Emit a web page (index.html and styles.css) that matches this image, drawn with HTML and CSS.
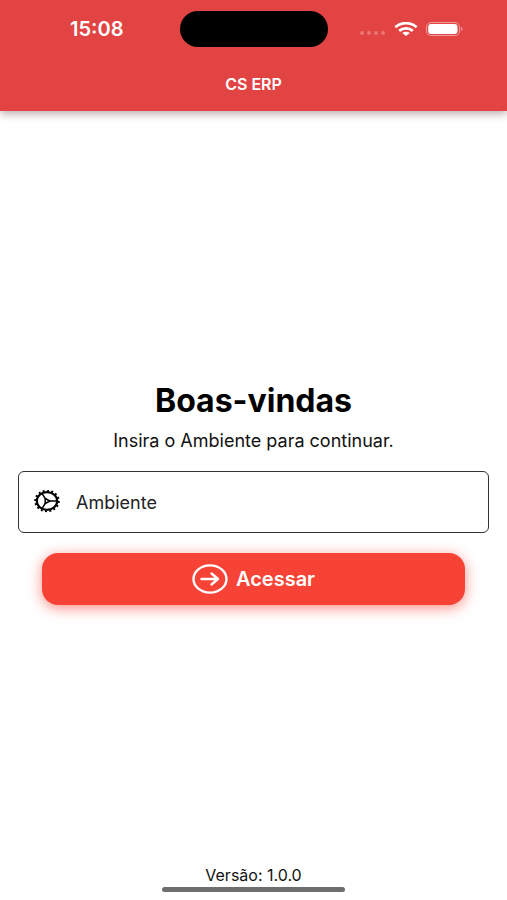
FILE: index.html
```html
<!DOCTYPE html>
<html lang="pt-BR">
<head>
    <meta charset="UTF-8">
    <meta name="viewport" content="width=device-width, initial-scale=1.0">
    <title>CS ERP</title>
    <link rel="stylesheet" href="styles.css">
</head>
<body>

<header class="app-bar">
    <div class="status-bar">
        <span class="clock">15:08</span>
        <span class="island"></span>
        <div class="status-icons">
            <svg class="dots" width="26" height="6" viewBox="0 0 26 6" aria-hidden="true">
                <circle cx="2" cy="3" r="2"/>
                <circle cx="9" cy="3" r="2"/>
                <circle cx="16" cy="3" r="2"/>
                <circle cx="23" cy="3" r="2"/>
            </svg>
            <svg width="24" height="14" viewBox="0 0 24 14" aria-hidden="true">
                <g fill="none" stroke="#fff" stroke-width="2.8">
                    <path d="M1.4 5.2C7 -0.2 17 -0.2 22.6 5.2"/>
                    <path d="M5.2 8.9C9 5.5 15 5.5 18.8 8.9"/>
                </g>
                <path fill="#fff" d="M8.2 11C10.4 9.2 13.6 9.2 15.8 11L12 14Z"/>
            </svg>
            <svg width="37" height="14" viewBox="0 0 37 14" aria-hidden="true">
                <rect x="0.5" y="0.5" width="33" height="13" rx="4.5" fill="none" stroke="#f09a9a"/>
                <rect x="2.2" y="2" width="29.3" height="10" rx="3" fill="#fff"/>
                <path fill="#f09a9a" d="M35 4.8C37 5.4 37 8.6 35 9.2Z"/>
            </svg>
        </div>
    </div>
    <div class="app-title">CS ERP</div>
</header>

<main>
    <form id="accessForm">
        <h1>Boas-vindas</h1>
        <p>Insira o Ambiente para continuar.</p>

        <label class="field" for="ambiente">
            <svg width="26" height="24" viewBox="0 0 26 24" fill="none" stroke="#000" aria-hidden="true">
                <ellipse cx="13" cy="11" rx="10.2" ry="8.8" stroke-width="2.2"/>
                <ellipse cx="13" cy="11" rx="11.8" ry="10.2" stroke-width="2" pathLength="64" stroke-dasharray="1.8 2.2"/>
                <path stroke-width="1.5" d="M15.5 11H23M11.4 8.9L8.2 3.6M11.4 13.1L8.2 18.4"/>
                <path stroke-width="1.5" stroke-linejoin="round" d="M11.2 8.5L15.8 11L11.2 13.5Z"/>
            </svg>
            <input type="text" id="ambiente" name="ambiente" placeholder="Ambiente" aria-label="Ambiente">
        </label>

        <button type="submit">
            <svg width="36" height="30" viewBox="0 0 36 30" fill="none" stroke="#fff" stroke-width="2.4" stroke-linecap="round" stroke-linejoin="round" aria-hidden="true">
                <ellipse cx="18" cy="15" rx="16.5" ry="13.6"/>
                <path d="M9.5 15H25.5M19.5 9.5L26 15L19.5 20.5"/>
            </svg>
            Acessar
        </button>
    </form>
</main>

<footer>
    <span>Versão: 1.0.0</span>
    <div class="home-bar"></div>
</footer>

</body>
</html>
```

FILE: styles.css
```css
* {
    box-sizing: border-box;
}
body {
    margin: 0;
    min-height: 100vh;
    display: flex;
    flex-direction: column;
    background-color: #fff;
    color: #111;
    font-family: Inter, "Liberation Sans", sans-serif;
    font-size: 16px;
}
.app-bar {
    background: #e14443;
    color: #fff;
    box-shadow: 0 3px 8px rgba(80, 20, 20, 0.35);
}
.status-bar {
    display: grid;
    grid-template-columns: 1fr 148px 1fr;
    align-items: center;
    height: 58px;
}
.clock {
    padding-right: 56px;
    text-align: right;
    font-size: 20px;
    font-weight: 600;
}
.island {
    height: 36px;
    border-radius: 18px;
    background: #000;
}
.status-icons {
    display: flex;
    align-items: center;
    gap: 8px;
    padding-left: 32px;
}
.dots {
    align-self: flex-end;
    fill: #ea7574;
}
.app-title {
    height: 53px;
    line-height: 52px;
    text-align: center;
    font-size: 16px;
    font-weight: 600;
}
main {
    flex: 1;
    display: flex;
    flex-direction: column;
    justify-content: center;
    padding: 10px 18px 0;
}
#accessForm {
    display: flex;
    flex-direction: column;
}
h1 {
    margin: 0;
    text-align: center;
    font-size: 32px;
    line-height: 40px;
    font-weight: 700;
    color: #000;
}
p {
    margin: 8px 0 18px;
    text-align: center;
    font-size: 18px;
    line-height: 24px;
}
.field {
    display: flex;
    align-items: center;
    gap: 16px;
    height: 62px;
    padding: 0 15px;
    border: 1px solid #333;
    border-radius: 6px;
}
.field input {
    flex: 1;
    min-width: 0;
    padding: 0;
    border: none;
    outline: none;
    background: none;
    font: inherit;
    font-size: 18px;
    color: #111;
}
.field input::placeholder {
    color: #222;
    opacity: 1;
}
button {
    display: flex;
    align-items: center;
    justify-content: center;
    gap: 8px;
    height: 52px;
    margin: 20px 24px 0;
    border: none;
    border-radius: 16px;
    background: #f64336;
    box-shadow: 0 3px 14px rgba(246, 67, 54, 0.6);
    color: #fff;
    font: inherit;
    font-size: 20px;
    font-weight: 600;
    cursor: pointer;
}
footer {
    display: flex;
    flex-direction: column;
    align-items: center;
    gap: 2px;
    padding-bottom: 8px;
    font-size: 16px;
    line-height: 20px;
}
.home-bar {
    width: 36%;
    height: 5px;
    border-radius: 3px;
    background: #6e6e6e;
}
```
